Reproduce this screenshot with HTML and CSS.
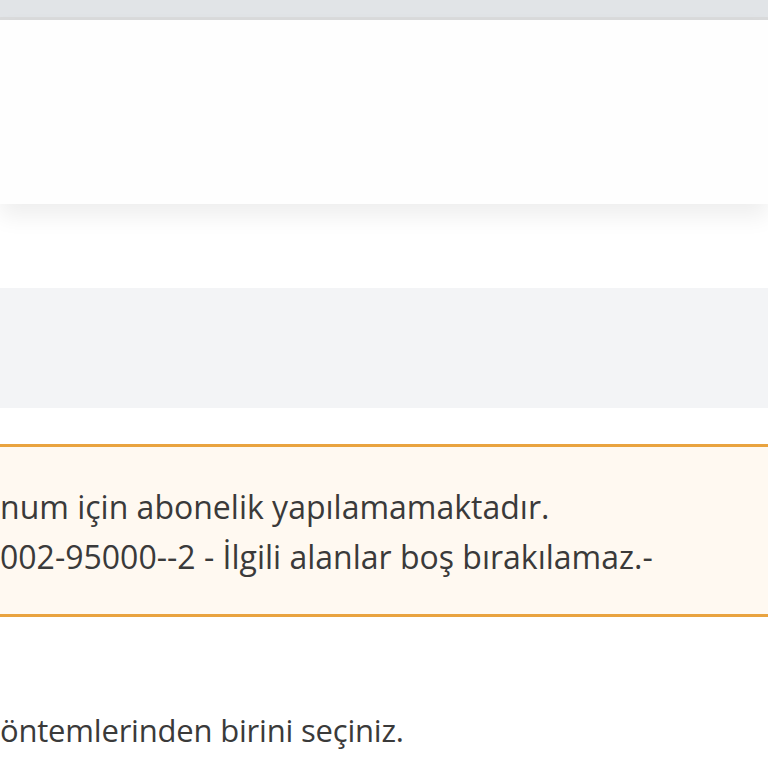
FILE: index.html
```html
<!DOCTYPE html>
<html lang="tr">
<head>
  <meta charset="UTF-8" />
  <title>Abonelik</title>
  <link rel="stylesheet" href="styles.css">
</head>
<body>

  <div class="topbar"></div>

  <div class="card"></div>

  <div class="gray-panel"></div>

  <div class="alert">
    <p class="line">num için abonelik yapılamamaktadır.</p>
    <p class="line">002-95000--2 - İlgili alanlar boş bırakılamaz.-</p>
  </div>

  <p class="hint">öntemlerinden birini seçiniz.</p>

</body>
</html>
```

FILE: styles.css
```css
body {
  margin: 0;
  font-family: 'Open Sans', 'Noto Sans', sans-serif;
  background-color: #fff;
  color: #3a3a3a;
  overflow: hidden;
}

.topbar {
  height: 17px;
  background: #e1e4e7;
  border-bottom: 3px solid #dadbdc;
}

.card {
  height: 184px;
  background: #fefefe;
  box-shadow: 0 12px 22px rgba(0, 0, 0, 0.07);
}

.gray-panel {
  height: 120px;
  margin-top: 84px;
  background: #f3f4f6;
}

.alert {
  margin-top: 36px;
  height: 173px;
  box-sizing: border-box;
  padding-top: 35px;
  background: #fff9f1;
  border-top: 3px solid #e9a33f;
  border-bottom: 3px solid #e9a33f;
}

.line {
  margin: 0;
  font-size: 32px;
  line-height: 50px;
  white-space: nowrap;
}

.hint {
  margin: 88px 0 0;
  font-size: 31px;
  line-height: 50px;
  letter-spacing: -0.2px;
  white-space: nowrap;
}
```
